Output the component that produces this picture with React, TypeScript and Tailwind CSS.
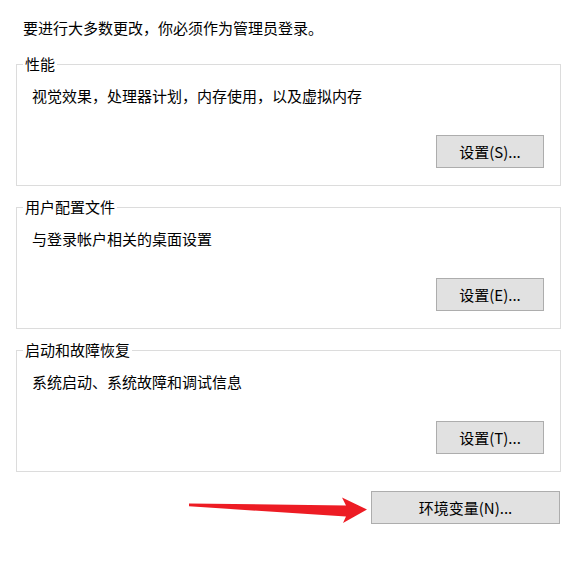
import React from "react";

const font = { fontFamily: '"Noto Sans CJK SC", "Noto Sans", sans-serif' };

function Group({ title, desc, btn, first }: { title: string; desc: string; btn: string; first?: boolean }) {
  return (
    <fieldset className={`border border-[#dcdcdc] ${first ? "mt-[16px]" : "mt-[11px]"}`}>
      <legend className="ml-[6px] px-[2px] text-[15px] leading-[20px] text-black">{title}</legend>
      <div className="mt-[12px] pl-[15px] text-[15px] leading-[20px] text-black">{desc}</div>
      <div className="mt-[29px] mb-[17px] mr-[16px] flex justify-end">
        <button className="w-[108px] h-[33px] bg-[#e1e1e1] border border-[#adadad] text-[15px] leading-[20px] text-black">
          {btn}
        </button>
      </div>
    </fieldset>
  );
}

export default function App() {
  return (
    <div className="relative w-[585px] h-[565px] bg-white overflow-hidden" style={font}>
      <div className="pl-[16px] pr-[24px] pt-[18px] flex flex-col">
        <div className="pl-[7px] text-[15px] leading-[20px] text-black">要进行大多数更改，你必须作为管理员登录。</div>
        <Group first title="性能" desc="视觉效果，处理器计划，内存使用，以及虚拟内存" btn="设置(S)..." />
        <Group title="用户配置文件" desc="与登录帐户相关的桌面设置" btn="设置(E)..." />
        <Group title="启动和故障恢复" desc="系统启动、系统故障和调试信息" btn="设置(T)..." />
        <div className="mt-[19px] flex justify-end pr-[1px]">
          <button className="w-[189px] h-[33px] bg-[#e1e1e1] border border-[#adadad] text-[15px] leading-[20px] text-black">
            环境变量(N)...
          </button>
        </div>
      </div>
      <svg className="absolute left-0 top-0 pointer-events-none" width="585" height="565" viewBox="0 0 585 565">
        <polygon
          points="189,503.5 346,505.5 342,497.5 367,509.5 343,523 346,516.5 189,506.3"
          fill="#ed1c24"
        />
      </svg>
    </div>
  );
}
